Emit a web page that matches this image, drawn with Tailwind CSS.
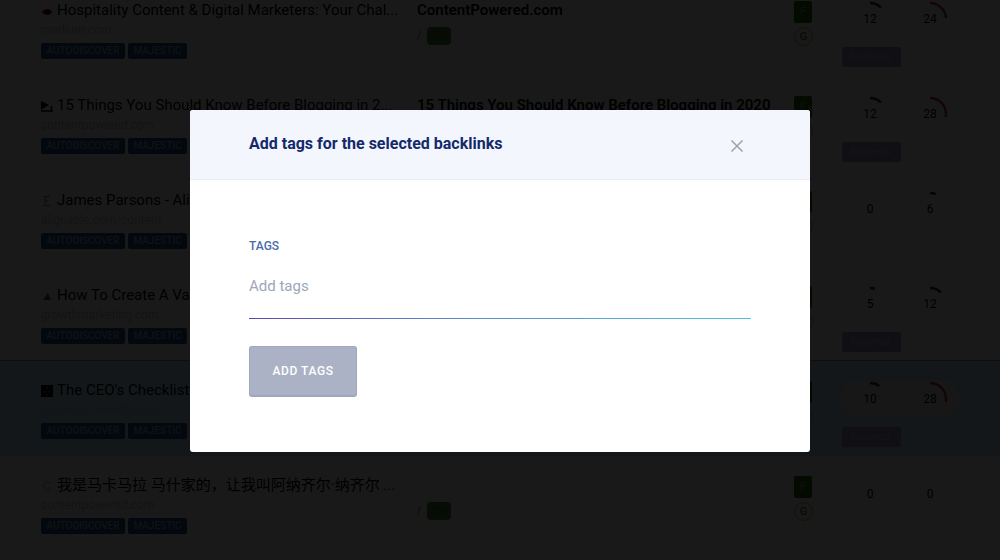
<!DOCTYPE html>
<html lang="en">
  <head>
    <meta charset="UTF-8" />
    <meta name="viewport" content="width=device-width, initial-scale=1.0" />
    <title>Backlinks</title>
    <script src="https://cdn.jsdelivr.net/npm/@tailwindcss/browser@4"></script>
  </head>
  <body class="h-screen overflow-hidden bg-white font-[Roboto,'Noto_Sans_CJK_SC',sans-serif]">
    <!-- Backlinks list -->
    <table class="-mt-[19px] w-full table-fixed text-black">
      <colgroup>
        <col class="w-[41%]" />
        <col />
        <col class="w-12" />
        <col class="w-40" />
      </colgroup>
      <tbody id="backlinks"></tbody>
    </table>

    <!-- Overlay -->
    <div class="fixed inset-0 flex items-start justify-center bg-black/90 pt-[110px]">
      <div
        role="dialog"
        aria-labelledby="modalTitle"
        class="w-full max-w-[620px] overflow-hidden rounded-[3px] bg-white"
      >
        <div class="flex h-[70px] items-center justify-between border-b border-[#e9edf5] bg-[#f3f6fd] pr-[66px] pl-[59px]">
          <h2 id="modalTitle" class="pb-0.5 text-base font-bold text-[#13296b]">
            Add tags for the selected backlinks
          </h2>
          <button type="button" aria-label="Close" class="pt-0.5 text-[#9ba0b3]">
            <svg class="size-3.5" viewBox="0 0 14 14" fill="none" stroke="currentColor" stroke-width="1.5">
              <path d="M1.5 1.5l11 11M12.5 1.5l-11 11" />
            </svg>
          </button>
        </div>

        <form id="formTags" class="px-[59px] pt-14 pb-[55px]">
          <label for="tags" class="block text-xs leading-5 font-medium text-[#4a6bab]">TAGS</label>
          <input
            type="text"
            id="tags"
            placeholder="Add tags"
            class="mt-2 block h-[54px] w-full pb-2.5 text-[15px] text-[#13296b] placeholder:text-[#9ca7b8] focus:outline-none"
          />
          <div class="h-px bg-linear-to-r from-[#5b48b8] via-[#5b93cf] to-[#4fc3dc]"></div>
          <button
            type="submit"
            class="mt-[27px] h-[51px] min-w-[108px] rounded-[3px] border border-b-2 border-[#a0a6bb] bg-[#abb2c6] px-[22px] text-xs font-medium tracking-wider text-white"
          >
            ADD TAGS
          </button>
        </form>
      </div>
    </div>

    <script>
      const icons = [
        '<ellipse cx="6" cy="7" rx="5" ry="3" fill="#a01028"/><circle cx="6" cy="7" r="2" fill="#000"/>',
        '<path d="M0 1l8 4-8 5z" fill="#000"/><path d="M0 11h12M10.500 6v5" stroke="#000" stroke-width="1.500"/>',
        '<path d="M4 1v10M4 1.500h5M4 6h3M4 10.500h5" stroke="#777" fill="none"/>',
        '<path d="M2 10l5-7 3 7z" fill="#555"/>',
        '<rect width="12" height="12" fill="#000"/><path d="M6 1v3M3 7h2M7 7h2M6 9v2" stroke="#999"/>',
        '<path d="M9 3a4 4 0 1 0 0 6" stroke="#999" fill="none"/>',
      ];

      const rows = [
        { title: "Hospitality Content & Digital Marketers: Your Chal...", domain: "medium.com", link: "ContentPowered.com", tf: 12, cf: 24, category: true },
        { title: "15 Things You Should Know Before Blogging in 2...", domain: "contentpowered.com", link: "15 Things You Should Know Before Blogging in 2020", tf: 12, cf: 28, category: true },
        { title: "James Parsons - Alignable", domain: "alignable.com/content", link: "Content Powered", tf: 0, cf: 6 },
        { title: "How To Create A Valuable Blog", domain: "growthmarketing.com", link: "Content Powered", tf: 5, cf: 12, category: true },
        { title: "The CEO's Checklist", domain: "business.linkedin.com", link: "Content Powered", tf: 10, cf: 28, category: true, selected: true },
        { title: "我是马卡马拉 马什家的，让我叫阿纳齐尔·纳齐尔 ...", domain: "contentpowered.com", link: "", tf: 0, cf: 0 },
      ];

      function gauge(value) {
        const color = value > 20 ? "#c02840" : "#501820";
        const arc = value
          ? `<circle cx="18" cy="18" r="16" pathLength="100" stroke="${color}" stroke-width="2.500" fill="none" stroke-dasharray="${value} 100" transform="rotate(-90 18 18)"/>`
          : "";
        return `
          <div class="grid h-9 w-[60px] place-items-center text-xs">
            <svg class="col-start-1 row-start-1 size-9" viewBox="0 0 36 36">${arc}</svg>
            <span class="col-start-1 row-start-1">${value}</span>
          </div>`;
      }

      function renderRow(row, i) {
        const rowClass = row.selected ? "bg-[#c8ecff] shadow-[0_-1px_0_#909090]" : "";
        const gaugeClass = row.selected ? "flex w-[120px] rounded-full bg-[#ebebeb]" : "flex w-[120px]";
        return `
          <tr class="h-[95px] align-top ${rowClass}">
            <td class="pt-[19px] pl-[41px]">
              <div class="flex h-5 items-center gap-1">
                <svg class="mt-0.5 size-3 shrink-0" viewBox="0 0 12 12">${icons[i]}</svg>
                <span class="text-[15px] leading-5 whitespace-nowrap">${row.title.replace("&", "&amp;")}</span>
              </div>
              <a href="#" class="block text-xs leading-5 text-[#b0c8e0]">${row.domain}</a>
              <div class="mt-[3px] flex gap-[3px] text-[10px] leading-4 font-medium text-[#8fb4d8]">
                <span class="w-[84px] rounded-xs bg-[#18558f] text-center">AUTODISCOVER</span>
                <span class="w-[59px] rounded-xs bg-[#18558f] text-center">MAJESTIC</span>
              </div>
            </td>
            <td class="pt-[19px] pl-[7px]">
              <div class="h-5 text-[15px] leading-5 font-semibold whitespace-nowrap">${row.link}</div>
              <div class="mt-[7px] flex items-center gap-1.5 text-[10px] leading-[18px] text-[#385a28]">
                <span class="w-1">/</span>
                <span class="w-6 rounded-sm bg-[#408030] text-center">200</span>
              </div>
            </td>
            <td class="pt-5 pl-0.5 text-center text-[11px] font-medium">
              <div class="h-[22px] w-[18px] rounded-xs bg-[#207000] leading-[22px] text-[#78a040]">F</div>
              <div class="mt-1 size-[19px] rounded-full border border-[#b0a850] leading-[18px] text-[#6c7028]">G</div>
            </td>
            <td class="pt-5">
              <div class="${gaugeClass}">${gauge(row.tf)}${gauge(row.cf)}</div>
              ${row.category ? '<div class="mt-2.5 ml-0.5 h-5 w-[59px] rounded-xs bg-[#a098c8] pl-2 text-[10px] leading-5 text-[#c8c0e0]">Business</div>' : ""}
            </td>
          </tr>`;
      }

      document.getElementById("backlinks").innerHTML = rows.map(renderRow).join("");

      document.getElementById("formTags").addEventListener("submit", function (e) {
        e.preventDefault();
      });
    </script>
  </body>
</html>
